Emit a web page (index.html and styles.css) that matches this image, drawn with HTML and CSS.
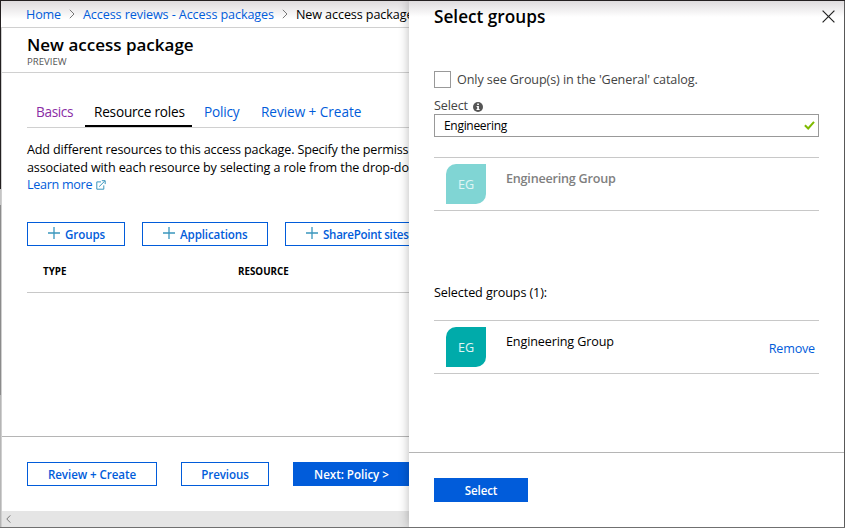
FILE: index.html
```
<!DOCTYPE html>
<html lang="en">
<head>
<meta charset="utf-8">
<title>New access package</title>
<link rel="stylesheet" href="styles.css">
</head>
<body>
<div class="window">
  <div class="edge-left"></div>
  <main class="page">
    <nav class="crumbs">
      <a class="crumb-home" href="#">Home</a>
      <svg class="chevron" width="6" height="10" viewBox="0 0 6 10"><path d="M.8 .8 5 5 .8 9.2"/></svg>
      <a class="crumb-reviews" href="#">Access reviews - Access packages</a>
      <svg class="chevron" width="6" height="10" viewBox="0 0 6 10"><path d="M.8 .8 5 5 .8 9.2"/></svg>
      <span>New access package</span>
    </nav>
    <div class="blade">
      <header class="blade-header">
        <h1>New access package</h1>
        <div class="preview">PREVIEW</div>
      </header>
      <div class="content">
        <div class="tabs">
          <a class="tab visited" href="#">Basics</a>
          <a class="tab active" href="#">Resource roles</a>
          <a class="tab policy" href="#">Policy</a>
          <a class="tab review" href="#">Review + Create</a>
        </div>
        <div class="intro">
          <p>Add different resources to this access package. Specify the permiss</p>
          <p class="second">associated with each resource by selecting a role from the drop-do</p>
          <p><a class="learn" href="#">Learn more</a><svg class="external" width="10" height="10" viewBox="0 0 10 10"><path d="M5 1.9H.8v7.3h7V5.4M3.2 6.6 8.8 1M5.8.7h3.4v3.4"/></svg></p>
        </div>
        <div class="actions">
          <button class="btn add-groups"><svg class="plus" width="12" height="12" viewBox="0 0 12 12"><path d="M6 0v12M0 6h12"/></svg>Groups</button>
          <button class="btn add-apps"><svg class="plus" width="12" height="12" viewBox="0 0 12 12"><path d="M6 0v12M0 6h12"/></svg>Applications</button>
          <button class="btn add-sites"><svg class="plus" width="12" height="12" viewBox="0 0 12 12"><path d="M6 0v12M0 6h12"/></svg>SharePoint sites</button>
        </div>
        <div class="table-head"><span>TYPE</span><span>RESOURCE</span></div>
      </div>
      <footer class="blade-footer">
        <button class="btn review-btn">Review + Create</button>
        <button class="btn previous-btn">Previous</button>
        <button class="btn primary next-btn">Next: Policy &gt;</button>
      </footer>
      <div class="scrollbar"><svg width="5" height="8" viewBox="0 0 5 8"><path d="M4.3.4.8 4l3.5 3.6"/></svg></div>
    </div>
  </main>
  <aside class="panel">
    <header class="panel-header">
      <h2>Select groups</h2>
      <svg class="close" width="13" height="13" viewBox="0 0 13 13"><path d="m.6.6 11.8 11.8M12.4.6.6 12.4"/></svg>
    </header>
    <div class="panel-body">
      <label class="filter"><span class="checkbox"></span>Only see Group(s) in the 'General' catalog.</label>
      <div class="field-label">Select<svg width="10" height="10" viewBox="0 0 10 10"><circle cx="5" cy="5" r="5" fill="#555"/><path d="M4.2 1.6h1.7v1.5H4.2zM3.6 4.1h2.3v3h.7v1H3.5v-1h.7V5.1h-.6z" fill="#fff"/></svg></div>
      <div class="search"><span>Engineering</span><svg width="11" height="9" viewBox="0 0 11 9"><path d="m.9 4.2 3.3 3.3L10 .9"/></svg></div>
      <div class="group-row muted">
        <span class="avatar">EG</span><span class="name">Engineering Group</span>
      </div>
      <div class="selected-title">Selected groups (1):</div>
      <div class="group-row">
        <span class="avatar">EG</span><span class="name">Engineering Group</span><a class="remove" href="#">Remove</a>
      </div>
    </div>
    <footer class="panel-footer"><button class="btn primary select-btn">Select</button></footer>
  </aside>
  <div class="edge-right"></div>
</div>
</body>
</html>
```
FILE: styles.css
```
* { box-sizing: border-box; }
body {
  margin: 0;
  font: 12.6px/18px "Open Sans", "Noto Sans", sans-serif;
  letter-spacing: -0.1px;
  color: #000;
  background: #fff;
}
a { color: #015cda; text-decoration: none; }
h1, h2, p { margin: 0; }
svg { display: block; flex: none; fill: none; }
.window {
  width: 845px;
  height: 528px;
  display: flex;
  overflow: hidden;
  border-top: 1px solid #231f20;
  border-bottom: 1px solid #707070;
  white-space: nowrap;
}
.edge-left { width: 1px; background: linear-gradient(#231f20 188px, #c4c4c4 188px 204px, #8b8b8b 204px 394px, #b5b5b5 394px); }
.edge-right { width: 1px; background: #666; }

.page {
  width: 408px;
  display: flex;
  flex-direction: column;
  overflow: hidden;
  background: linear-gradient(#dedbdd, #fff 18px);
}
.crumbs {
  height: 27px;
  flex: none;
  display: flex;
  align-items: center;
  padding-left: 25px;
  border-bottom: 1px solid #d0d0d0;
}
.crumbs a, .crumbs span { position: relative; top: 1px; }
.chevron { stroke: #777; margin: 0 8px; }
.crumb-home { width: 35px; letter-spacing: -0.15px; }
.crumb-reviews { width: 192px; }
.blade {
  flex: 1;
  display: flex;
  flex-direction: column;
  background: #fff;
  border-left: 1px solid #cfcfcf;
}
.blade-header { height: 45px; padding: 5px 0 0 25px; border-bottom: 1px solid #d0d0d0; }
h1 { font-size: 17px; line-height: 24px; font-weight: 600; letter-spacing: 0; }
.preview { font-size: 9.6px; line-height: 12px; margin-top: -1px; color: #555; letter-spacing: 0; }
.content { flex: 1; padding: 23px 0 0 25px; }
.tabs { display: flex; height: 32px; border-bottom: 1px solid #d0d0d0; font-size: 13.6px; }
.tab { line-height: 31px; height: 31px; letter-spacing: -0.2px; }
.visited { padding-left: 9px; width: 58px; color: #8a2da5; letter-spacing: -0.35px; }
.active { width: 107px; padding-left: 9px; border-bottom: 2px solid #000; color: #000; }
.policy { margin-left: 12px; width: 57px; }
.review { letter-spacing: -0.05px; }
.intro { padding-top: 13px; line-height: 17.5px; letter-spacing: -0.16px; }
.intro p { display: flex; height: 17.5px; }
.intro .second { letter-spacing: -0.13px; }
.learn { width: 69px; letter-spacing: -0.3px; }
.external { stroke: #3a96bd; margin-top: 4px; }
.actions { display: flex; gap: 17px; margin-top: 28px; }
.btn {
  display: flex;
  align-items: center;
  justify-content: center;
  flex: none;
  height: 24px;
  margin: 0;
  padding: 2px 0 0;
  border: 1px solid #015cda;
  background: #fff;
  color: #015cda;
  font: 600 11.6px/22px "Open Sans", "Noto Sans", sans-serif;
  letter-spacing: -0.12px;
}
.plus { stroke: #3a96bd; stroke-width: 1.3; margin: -4px 5px 0 0; }
.add-groups, .add-apps, .add-sites { justify-content: flex-start; padding: 2px 0 0 20px; }
.add-groups { width: 98px; }
.add-apps { width: 126px; }
.add-sites { width: 146px; letter-spacing: -0.3px; }
.table-head {
  height: 47px;
  display: grid;
  grid-template-columns: 195px 1fr;
  padding: 17px 0 0 16px;
  border-bottom: 1px solid #c8c8c8;
  font-size: 9.8px;
  font-weight: 700;
  letter-spacing: 0;
}
.blade-footer { height: 75px; display: flex; gap: 24px; padding: 25px 0 0 25px; border-top: 1px solid #b5b5b5; }
.primary { background: #015cda; color: #fff; }
.review-btn { width: 130px; letter-spacing: -0.08px; }
.previous-btn { width: 88px; }
.next-btn { width: 117px; letter-spacing: -0.03px; }
.scrollbar { height: 16px; padding: 4px 0 0 4px; background: #e5e5e5; }
.scrollbar svg { stroke: #777; }

.panel {
  width: 435px;
  display: flex;
  flex-direction: column;
  position: relative;
  background: linear-gradient(#dedbdd, #fff 16px);
  box-shadow: 0 0 10px rgba(0, 0, 0, 0.28);
}
.panel-header { display: flex; justify-content: space-between; height: 70px; padding: 4px 9px 0 25px; }
h2 { font-size: 17.2px; line-height: 24px; font-weight: 600; letter-spacing: 0; }
.close { stroke: #222; stroke-width: 1.2; margin-top: 5px; }
.panel-body { flex: 1; padding: 0 25px; }
.filter { display: flex; align-items: center; height: 17px; color: #444; }
.checkbox { width: 17px; height: 17px; margin-right: 6px; border: 1px solid #999; background: #fff; }
.field-label { display: flex; gap: 5px; height: 26px; padding-top: 9px; color: #444; letter-spacing: -0.15px; }
.field-label svg { margin-top: 5px; }
.search {
  height: 23px;
  display: flex;
  align-items: center;
  justify-content: space-between;
  padding: 0 3px 0 9px;
  border: 1px solid #999;
  background: #fff;
  font-size: 12px;
  letter-spacing: -0.3px;
}
.search svg { stroke: #7fba00; stroke-width: 2; }
.group-row {
  display: flex;
  height: 54px;
  margin-top: 20px;
  padding: 6px 4px 0 12px;
  border: 1px solid #c8c8c8;
  border-width: 1px 0;
}
.avatar {
  width: 40px;
  height: 40px;
  margin-right: 20px;
  border-radius: 10px 0;
  background: #00abaa;
  color: #e0f5f5;
  text-align: center;
  line-height: 41px;
}
.name { margin-top: 6px; letter-spacing: -0.13px; }
.muted .avatar { background: #80d5d4; }
.muted .name { color: #808080; font-weight: 600; letter-spacing: -0.22px; }
.remove { margin: 13px 0 0 auto; letter-spacing: -0.2px; }
.selected-title { margin-top: 73px; height: 18px; }
.selected-title + .group-row { margin-top: 18px; }
.panel-footer { height: 75px; padding: 25px 0 0 25px; border-top: 1px solid #b5b5b5; }
.select-btn { width: 94px; }
```
